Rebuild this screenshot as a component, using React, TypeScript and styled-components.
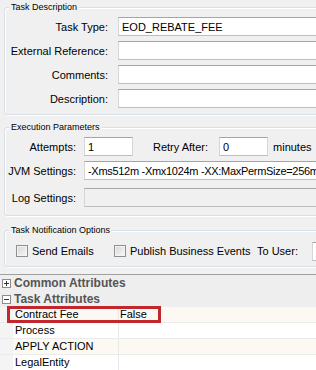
import styled, { createGlobalStyle } from 'styled-components';

const GlobalStyle = createGlobalStyle`
  body {
    margin: 0;
    background: #f0f0f0;
    font-family: "Liberation Sans", Arial, sans-serif;
    font-size: 11px;
    color: #000;
  }
`;

interface RowProps {
  $space?: number;
  $gap?: number;
}

interface LabelProps {
  $width: number;
}

interface InputProps {
  $width?: number;
  $disabled?: boolean;
  $tight?: boolean;
}

interface CheckProps {
  $width: number;
}

interface DataProps {
  $odd?: boolean;
}

const attributes = [
  { name: 'Contract Fee', value: 'False' },
  { name: 'Process', value: '' },
  { name: 'APPLY ACTION', value: '' },
  { name: 'LegalEntity', value: '' },
];

const Toggle = ({ open }: { open?: boolean }) => (
  <svg width="9" height="9" viewBox="0 0 9 9">
    <rect x="0.5" y="0.5" width="8" height="8" fill="#fff" stroke="#8c8c8c" />
    <path d="M2 4.5h5" stroke="#333" />
    {!open && <path d="M4.5 2v5" stroke="#333" />}
  </svg>
);

export default function App() {
  return (
    <Page>
      <GlobalStyle />
      <Forms>
        <Group>
          <Legend>Task Description</Legend>
          <Row>
            <Label $width={100}>Task Type:</Label>
            <Input readOnly defaultValue="EOD_REBATE_FEE" />
          </Row>
          <Row $space={5}>
            <Label $width={100}>External Reference:</Label>
            <Input readOnly />
          </Row>
          <Row $space={5}>
            <Label $width={100}>Comments:</Label>
            <Input readOnly />
          </Row>
          <Row $space={5}>
            <Label $width={100}>Description:</Label>
            <Input readOnly />
          </Row>
        </Group>

        <Group $top={6} $bottom={8}>
          <Legend>Execution Parameters</Legend>
          <Row $gap={8}>
            <Label $width={68}>Attempts:</Label>
            <Input readOnly defaultValue="1" $width={49} />
            <Text style={{ marginLeft: 12 }}>Retry After:</Text>
            <Input readOnly defaultValue="0" $width={49} style={{ marginLeft: 3 }} />
            <Text style={{ marginLeft: -3 }}>minutes</Text>
          </Row>
          <Row $space={5} $gap={8}>
            <Label $width={68}>JVM Settings:</Label>
            <Input readOnly $tight defaultValue="-Xms512m -Xmx1024m -XX:MaxPermSize=256m" />
          </Row>
          <Row $space={8} $gap={8}>
            <Label $width={68}>Log Settings:</Label>
            <Input readOnly $disabled />
          </Row>
        </Group>

        <Group $top={8} $bottom={4}>
          <Legend>Task Notification Options</Legend>
          <CheckRow>
            <CheckItem $width={98}>
              <Box />
              <span>Send Emails</span>
            </CheckItem>
            <CheckItem $width={143}>
              <Box />
              <span>Publish Business Events</span>
            </CheckItem>
            <Text>To User:</Text>
            <Input readOnly $width={60} style={{ marginLeft: 14 }} />
          </CheckRow>
        </Group>
      </Forms>

      <Grid>
        <Category>
          <Toggle />
          <CategoryName>Common Attributes</CategoryName>
        </Category>
        <Category>
          <Toggle open />
          <CategoryName>Task Attributes</CategoryName>
        </Category>
        {attributes.map((a, i) => (
          <DataRow key={a.name} $odd={i % 2 === 0}>
            <Indent />
            <Name>{a.name}</Name>
            <Value>{a.value}</Value>
            {i === 0 && <Highlight />}
          </DataRow>
        ))}
      </Grid>
    </Page>
  );
}

const Page = styled.div`
  width: 316px;
  height: 370px;
  overflow: hidden;
  display: flex;
  flex-direction: column;
  background: #f0f0f0;
`;

const Forms = styled.div`
  display: flex;
  flex-direction: column;
  padding: 1px 0 0 4px;
  width: 400px;
`;

const Group = styled.fieldset<{ $top?: number; $bottom?: number }>`
  margin: ${p => p.$top || 0}px 0 0 0;
  padding: 4px 0 ${p => (p.$bottom === undefined ? 6 : p.$bottom)}px 3px;
  min-width: 0;
  border: 1px solid #d5dfe5;
  border-radius: 3px;
  box-shadow: inset 1px 1px 0 #fff, 1px 1px 0 #fff;
`;

const Legend = styled.legend`
  margin-left: 1px;
  padding: 0 2px;
  font-size: 9px;
  line-height: 12px;
  background: #f0f0f0;
`;

const Row = styled.div<RowProps>`
  display: flex;
  align-items: center;
  gap: ${p => p.$gap || 10}px;
  margin-top: ${p => p.$space || 0}px;
  height: 19px;
`;

const Label = styled.span<LabelProps>`
  width: ${p => p.$width}px;
  flex-shrink: 0;
  text-align: right;
  white-space: nowrap;
`;

const Text = styled.span`
  white-space: nowrap;
`;

const Input = styled.input<InputProps>`
  box-sizing: border-box;
  height: 19px;
  width: ${p => (p.$width ? `${p.$width}px` : 'auto')};
  flex: ${p => (p.$width ? '0 0 auto' : '1')};
  margin: 0;
  padding: 0 3px;
  border: 1px solid;
  border-color: #a5a5a5 #d6d6d6 #bdbdbd #d6d6d6;
  background: ${p => (p.$disabled ? '#f0f0f0' : '#fff')};
  font-family: "Liberation Sans", Arial, sans-serif;
  font-size: 11px;
  letter-spacing: ${p => (p.$tight ? '-0.3px' : 'normal')};
  color: #000;
  outline: none;
`;

const CheckRow = styled.div`
  display: flex;
  align-items: center;
  height: 22px;
  padding-left: 8px;
`;

const CheckItem = styled.label<CheckProps>`
  display: flex;
  align-items: center;
  gap: 4px;
  width: ${p => p.$width}px;
  flex-shrink: 0;
  white-space: nowrap;
`;

const Box = styled.span`
  box-sizing: border-box;
  width: 12px;
  height: 12px;
  border: 1px solid #8e8f8f;
  background: linear-gradient(135deg, #d6d6d6, #f8f8f8);
  box-shadow: inset 0 0 0 1px #f4f4f4;
`;

const Grid = styled.div`
  margin-top: 7px;
  flex: 1;
  border-top: 1px solid #a0a0a0;
  background: #fff;
`;

const Category = styled.div`
  display: flex;
  align-items: center;
  height: 16px;
  padding-left: 2px;
  gap: 3px;
  background: #eeeeee;
`;

const CategoryName = styled.span`
  font-size: 12px;
  font-weight: bold;
  color: #555;
`;

const DataRow = styled.div<DataProps>`
  position: relative;
  display: grid;
  grid-template-columns: 13px 106px 1fr;
  height: 16px;
  box-sizing: border-box;
  border-bottom: 1px solid #ebebeb;
  background: ${p => (p.$odd ? '#fbf9f2' : '#fff')};
`;

const Indent = styled.div`
  background: #f4f4f4;
`;

const Name = styled.div`
  padding-left: 2px;
  line-height: 15px;
  border-right: 1px solid #e8e8e8;
  white-space: nowrap;
`;

const Value = styled.div`
  padding-left: 1px;
  line-height: 15px;
`;

const Highlight = styled.div`
  position: absolute;
  left: 7px;
  top: -1px;
  width: 154px;
  height: 17px;
  box-sizing: border-box;
  border: 3px solid #c1272d;
`;
